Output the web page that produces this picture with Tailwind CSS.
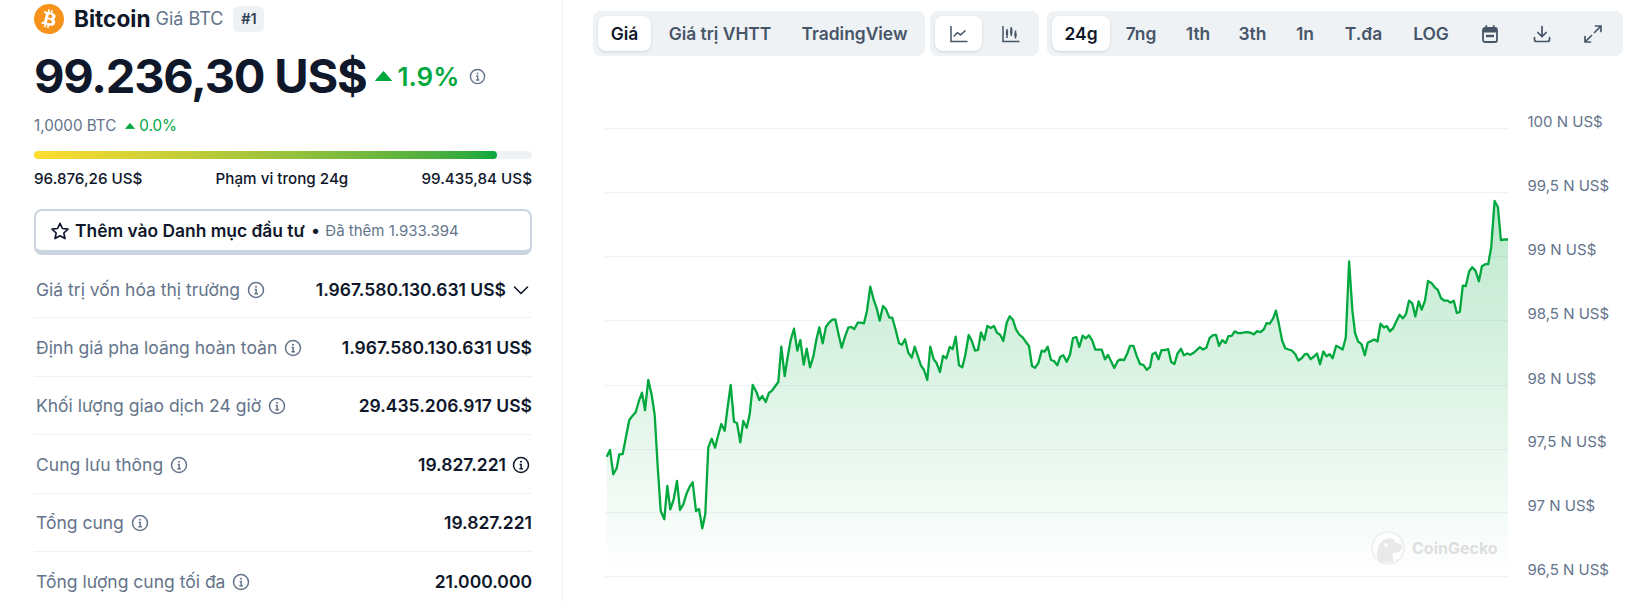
<!DOCTYPE html>
<html lang="vi">
<head>
  <meta charset="UTF-8">
  <title>Bitcoin</title>
  <script src="https://cdn.jsdelivr.net/npm/@tailwindcss/browser@4"></script>
</head>
<body class="bg-white text-[#0f172a] [font-family:Inter,sans-serif] overflow-hidden">
  <svg class="hidden">
    <symbol id="info" viewBox="0 0 24 24" fill="none" stroke="currentColor" stroke-width="2">
      <circle cx="12" cy="12" r="10"/>
      <path d="M10.2 11.2H12.2V16.8M9.8 17H14.6" stroke-width="2"/>
      <circle cx="12" cy="7.6" r="1.3" fill="currentColor" stroke="none"/>
    </symbol>
  </svg>

  <div class="flex h-[603px]">
    <!-- left column -->
    <aside class="w-[563px] shrink-0 border-r border-[#eff2f5] pl-[34px] pr-[30px] pt-[4px]">
      <div class="flex items-center h-[29px]">
        <svg class="w-[30px] h-[30px] shrink-0" viewBox="0 0 24 24"><circle cx="12" cy="12" r="11" fill="#fff"/><path fill="#f7931a" d="M23.638 14.904c-1.602 6.43-8.113 10.34-14.542 8.736C2.67 22.05-1.244 15.525.362 9.105 1.962 2.67 8.475-1.243 14.9.358c6.43 1.605 10.342 8.115 8.738 14.548v-.002zm-6.35-4.613c.24-1.59-.974-2.45-2.64-3.03l.54-2.153-1.315-.33-.525 2.107c-.345-.087-.705-.167-1.064-.25l.526-2.127-1.32-.33-.54 2.165c-.285-.067-.565-.132-.84-.2l-1.815-.45-.35 1.407s.975.225.955.236c.535.136.63.486.615.766l-1.477 5.92c-.075.166-.24.406-.614.314.015.02-.96-.24-.96-.24l-.66 1.51 1.71.426.93.242-.54 2.19 1.32.327.54-2.17c.36.1.705.19 1.05.273l-.51 2.154 1.32.33.545-2.19c2.24.427 3.93.257 4.64-1.774.57-1.637-.03-2.58-1.217-3.196.854-.193 1.5-.76 1.68-1.93h.01zm-3.01 4.22c-.404 1.64-3.157.75-4.05.53l.72-2.9c.896.23 3.757.67 3.33 2.37zm.41-4.24c-.37 1.49-2.662.735-3.405.55l.654-2.64c.744.18 3.137.524 2.75 2.084v.006z"/></svg>
        <span class="ml-[10px] text-[22.6px] font-bold">Bitcoin</span>
        <span class="ml-[5px] text-[18px] text-[#64748b]">Giá BTC</span>
        <span class="ml-[10px] w-[31px] h-[26px] rounded-md bg-[#eff2f5] text-[#334155] text-[14.5px] font-semibold flex items-center justify-center">#1</span>
      </div>

      <div class="mt-[15px] h-[56px] flex items-center">
        <span class="text-[47px] font-bold leading-[56px] tracking-[-1.2px]">99.236,30 US$</span>
        <svg class="ml-[8px] w-[17px] h-[10px]" viewBox="0 0 17 10"><path d="M8.5 0.5 16.5 9.5H0.5Z" fill="#00a83e" stroke="#00a83e" stroke-linejoin="round"/></svg>
        <span class="ml-[6px] text-[26px] font-semibold text-[#00a83e]">1.9%</span>
        <svg class="ml-[10px] w-[17px] h-[17px] text-[#64748b]"><use href="#info"/></svg>
      </div>

      <div class="mt-[12px] h-[20px] flex items-center text-[15.2px]">
        <span class="text-[#64748b]">1,0000 BTC</span>
        <svg class="ml-[9px] w-[10px] h-[6px]" viewBox="0 0 17 10"><path d="M8.5 0.5 16.5 9.5H0.5Z" fill="#00a83e" stroke="#00a83e" stroke-linejoin="round"/></svg>
        <span class="ml-[4px] text-[#00a83e]">0.0%</span>
      </div>

      <div class="mt-[15px] h-[8px] rounded-full bg-[#eff2f5]">
        <div class="h-full w-[93%] rounded-full bg-gradient-to-r from-[#ffdd2e] to-[#00a83e]"></div>
      </div>
      <div class="mt-[10px] h-[20px] flex items-center justify-between text-[15.2px] font-medium">
        <span>96.876,26 US$</span>
        <span>Phạm vi trong 24g</span>
        <span>99.435,84 US$</span>
      </div>

      <button class="mt-[20px] w-full h-[46px] flex items-center rounded-lg border-2 border-b-[5px] border-[#cbd5e1] pl-[14px] pt-[1px] bg-white">
        <svg class="w-[20px] h-[20px] shrink-0" viewBox="0 0 24 24" fill="none" stroke="#0f172a" stroke-width="2" stroke-linejoin="round"><path d="M12 2.8 14.9 9l6.7.8-5 4.6 1.4 6.7L12 17.7l-6 3.4 1.4-6.7-5-4.6L9.1 9z"/></svg>
        <span class="ml-[5px] text-[17.4px] font-semibold">Thêm vào Danh mục đầu tư</span>
        <span class="ml-[6px] text-[17px]">•</span>
        <span class="ml-[5px] text-[15px] text-[#64748b]">Đã thêm 1.933.394</span>
      </button>

      <!-- stats -->
      <div class="mt-[5px] text-[17.5px]">
        <div class="h-[58.4px] pt-[2px] flex items-center justify-between border-b border-[#eff2f5] pl-[2px]">
          <span class="flex items-center text-[#64748b]">Giá trị vốn hóa thị trường<svg class="ml-[7px] w-[18px] h-[18px]"><use href="#info"/></svg></span>
          <span class="flex items-center font-semibold">1.967.580.130.631 US$<svg class="ml-[6px] mr-[2px] w-[18px] h-[18px]" viewBox="0 0 18 18" fill="none" stroke="#0f172a" stroke-width="1.6" stroke-linecap="round" stroke-linejoin="round"><path d="M2.5 6 9 12.5 15.5 6"/></svg></span>
        </div>
        <div class="h-[58.4px] pt-[2px] flex items-center justify-between border-b border-[#eff2f5] pl-[2px]">
          <span class="flex items-center text-[#64748b]">Định giá pha loãng hoàn toàn<svg class="ml-[7px] w-[18px] h-[18px]"><use href="#info"/></svg></span>
          <span class="font-semibold">1.967.580.130.631 US$</span>
        </div>
        <div class="h-[58.4px] pt-[2px] flex items-center justify-between border-b border-[#eff2f5] pl-[2px]">
          <span class="flex items-center text-[#64748b]">Khối lượng giao dịch 24 giờ<svg class="ml-[7px] w-[18px] h-[18px]"><use href="#info"/></svg></span>
          <span class="font-semibold">29.435.206.917 US$</span>
        </div>
        <div class="h-[58.4px] pt-[2px] flex items-center justify-between border-b border-[#eff2f5] pl-[2px]">
          <span class="flex items-center text-[#64748b]">Cung lưu thông<svg class="ml-[7px] w-[18px] h-[18px]"><use href="#info"/></svg></span>
          <span class="flex items-center font-semibold">19.827.221<svg class="ml-[6px] mr-[2px] w-[18px] h-[18px]"><use href="#info"/></svg></span>
        </div>
        <div class="h-[58.4px] pt-[2px] flex items-center justify-between border-b border-[#eff2f5] pl-[2px]">
          <span class="flex items-center text-[#64748b]">Tổng cung<svg class="ml-[7px] w-[18px] h-[18px]"><use href="#info"/></svg></span>
          <span class="font-semibold">19.827.221</span>
        </div>
        <div class="h-[58.4px] pt-[2px] flex items-center justify-between pl-[2px]">
          <span class="flex items-center text-[#64748b]">Tổng lượng cung tối đa<svg class="ml-[7px] w-[18px] h-[18px]"><use href="#info"/></svg></span>
          <span class="font-semibold">21.000.000</span>
        </div>
      </div>
    </aside>

    <!-- chart panel -->
    <main class="flex-1 min-w-0">
      <div class="pt-[11px] pl-[30px] flex h-[56px] text-[17.4px] font-semibold text-[#475569]">
        <div class="flex h-[45px] p-[5px] rounded-lg bg-[#eff2f5]">
          <button class="w-[53px] pt-[1px] rounded-lg bg-white shadow-sm text-[#0f172a]">Giá</button>
          <button class="w-[138px] pt-[1px]">Giá trị VHTT</button>
          <button class="w-[131px] pt-[1px]">TradingView</button>
        </div>
        <div class="ml-[5px] flex h-[45px] p-[5px] rounded-lg bg-[#eff2f5]">
          <button class="w-[47px] rounded-lg bg-white shadow-sm flex items-center justify-center">
            <svg class="w-[20px] h-[20px]" viewBox="0 0 20 20" fill="none" stroke="#475569" stroke-width="1.5"><path d="M2 2V17.5H18.5"/><path d="M4.8 12.5 8.5 8.6l3 2.3 5-4.4" stroke-linejoin="round"/></svg>
          </button>
          <button class="w-[52px] flex items-center justify-center pl-[6px]">
            <svg class="w-[20px] h-[20px]" viewBox="0 0 20 20" fill="none" stroke="#475569" stroke-width="1.5"><path d="M2 2V17.5H18.5"/><path d="M6 5v9M10.3 3v9M14.5 6.5v8"/><path d="M4.9 7h2.2v4H4.9zM9.2 5h2.2v5H9.2zM13.4 9h2.2v3.5h-2.2z" fill="#475569" stroke="none"/></svg>
          </button>
        </div>
        <div class="ml-[8px] flex h-[45px] p-[5px] rounded-lg bg-[#eff2f5]">
          <button class="w-[58px] pt-[1px] rounded-lg bg-white shadow-sm text-[#0f172a]">24g</button>
          <button class="w-[62px] pt-[1px]">7ng</button>
          <button class="w-[52px] pt-[1px]">1th</button>
          <button class="w-[57px] pt-[1px]">3th</button>
          <button class="w-[48px] pt-[1px]">1n</button>
          <button class="w-[69px] pt-[1px]">T.đa</button>
          <button class="w-[66px] pt-[1px]">LOG</button>
          <button class="w-[52px] flex items-center justify-center">
            <svg class="w-[20px] h-[20px]" viewBox="0 0 20 20" fill="none" stroke="#475569" stroke-width="1.8"><rect x="3" y="4" width="14" height="14" rx="2"/><path d="M3 6.5h14" stroke-width="4"/><path d="M6.3 1.8V4M13.7 1.8V4" stroke-linecap="round"/><path d="M6 12h8" stroke-width="2.4"/></svg>
          </button>
          <button class="w-[52px] flex items-center justify-center">
            <svg class="w-[20px] h-[20px]" viewBox="0 0 20 20" fill="none" stroke="#475569" stroke-width="1.7" stroke-linecap="round" stroke-linejoin="round"><path d="M10 2.5V12.5M5.8 8.5 10 12.7 14.2 8.5"/><path d="M2.5 13.5V15.5a2 2 0 0 0 2 2h11a2 2 0 0 0 2-2V13.5"/></svg>
          </button>
          <button class="w-[50px] flex items-center justify-center">
            <svg class="w-[20px] h-[20px]" viewBox="0 0 20 20" fill="none" stroke="#475569" stroke-width="1.7" stroke-linecap="round" stroke-linejoin="round"><path d="M11.5 8.5 18 2M12.5 2H18V7.5"/><path d="M8.5 11.5 2 18M7.5 18H2V12.5"/></svg>
          </button>
        </div>
      </div>

      <svg class="block w-[1082px] h-[547px]" viewBox="563 56 1082 547">
        <defs>
          <linearGradient id="area" x1="0" y1="200" x2="0" y2="576" gradientUnits="userSpaceOnUse">
            <stop offset="0" stop-color="#00a83e" stop-opacity="0.26"/>
            <stop offset="1" stop-color="#00a83e" stop-opacity="0"/>
          </linearGradient>
        </defs>
        <g stroke="#eff2f5" stroke-width="1">
          <path d="M605 128.5H1508M605 192.5H1508M605 256.5H1508M605 320.5H1508M605 385.5H1508M605 449.5H1508M605 512.5H1508M605 576.5H1508"/>
        </g>
        <path id="fill" fill="url(#area)"/>
        <path id="line" fill="none" stroke="#00a83e" stroke-width="2.3" stroke-linejoin="round"/>
        <g class="text-[15px]" fill="#64748b">
          <text x="1527.5" y="127">100 N US$</text>
          <text x="1527.5" y="191">99,5 N US$</text>
          <text x="1527.5" y="255">99 N US$</text>
          <text x="1527.5" y="319">98,5 N US$</text>
          <text x="1527.5" y="384">98 N US$</text>
          <text x="1527.5" y="447">97,5 N US$</text>
          <text x="1527.5" y="511">97 N US$</text>
          <text x="1527.5" y="575">96,5 N US$</text>
        </g>
        <!-- watermark -->
        <g opacity="0.75">
          <circle cx="1388" cy="548" r="16" fill="#fff" stroke="#e2e2e2" stroke-width="1.2"/>
          <path d="M1378 561c-2-8-1-17 6-21 6-3 11-1 12 3 3 0 6 1 6 4 0 4-5 6-9 6-1 3 0 6 1 8-5 2-11 2-16 0z" fill="#e3e3e3"/>
          <circle cx="1386" cy="545" r="2" fill="#fff"/>
          <text x="1412" y="554" class="text-[16px] font-bold" fill="#d4d4d4">CoinGecko</text>
        </g>
      </svg>
    </main>
  </div>

  <script>
    // traced in three pieces from the reference, [offsetX, offsetY, scale, points]
    var parts = [
      [600, 360, 3, [20,290,30,270,40,343,50,325,58,283,68,282,78,230,88,180,97,168,107,157,116,125,126,98,135,150,145,60,155,105,164,165,173,320,182,452,193,478,202,378,211,448,221,418,231,363,240,450,250,433,259,403,269,380,278,367,288,453,297,447,307,505,316,462,325,262,335,236,345,263,354,228,364,192,374,212,383,140,392,75,402,185,411,189,421,247,430,183,440,203,449,163,458,75,469,95,478,120,487,108,497,126,507,98,516,92,526,78,535,66]],
      [600, 100, 3, [544,740,554,828,563,770,572,720,582,686,592,752,601,720,611,794,620,746,630,802,640,770,649,720,658,682,668,730,678,680,687,668,697,659,706,658,716,705,725,743,735,710,745,683,754,681,763,687,773,668,782,668,792,670,801,632,811,560,820,595,830,625,839,662,849,618,858,628,868,653,877,653,887,690,897,730,906,734,915,718,925,758,935,773,944,740,954,770,963,797,972,810,982,840,991,740,1001,778,1010,790,1020,816,1029,768,1039,775,1049,741,1058,747,1067,710,1077,796,1087,802,1096,765,1106,705,1115,722,1125,752,1134,750,1143,697,1153,720,1162,678,1172,684,1182,678,1191,698,1201,705,1210,723,1220,668,1229,649,1239,660,1248,688,1258,704,1268,712,1277,725,1287,738,1296,798,1305,803,1315,790,1325,752,1334,755,1343,740,1353,780,1362,783,1372,796,1381,770,1390,766,1400,785,1410,764,1419,714,1429,711,1438,741,1448,707,1457,715,1467,706,1477,722,1486,749,1496,749,1505,749,1515,778,1524,765,1534,785,1543,804,1553,783]],
      [1120, 100, 2.99, [0,776,12,778,22,757,30,735,40,735,50,765,60,790,70,792,80,807,90,798,97,760,106,755,115,775,124,748,134,748,144,745,153,783,163,789,172,758,182,744,191,763,201,758,210,762,220,756,229,748,239,739,248,746,258,741,268,712,278,703,287,702,296,735,306,718,316,727,324,706,334,705,343,692,353,697,362,697,372,695,382,694,391,696,400,701,410,691,420,694,430,686,438,667,448,669,458,652,466,630,475,670,485,720,494,742,504,746,514,749,524,760,533,779,543,772,553,760,560,759,570,775,580,767,589,758,598,790,608,752,617,766,627,760,636,772,646,735,656,740,666,746,675,710,685,483,695,630,703,697,712,722,722,730,732,763,741,725,751,721,760,716,770,722,779,669,789,680,798,676,807,692,817,682,827,660,836,642,846,653,855,640,864,600,874,608,883,647,893,602,902,627,912,600,921,541,931,547,941,560,950,567,960,593,970,600,980,600,988,606,998,600,1007,637,1016,634,1025,555,1034,556,1044,512,1053,500,1063,510,1073,542,1082,497,1092,491,1101,491,1110,440,1120,302,1130,320,1139,419,1150,417,1160,417]]
    ];
    var pts = [];
    parts.forEach(function (p) {
      for (var i = 0; i < p[3].length; i += 2) {
        pts.push((p[0] + p[3][i] / p[2]).toFixed(1) + ' ' + (p[1] + p[3][i + 1] / p[2]).toFixed(1));
      }
    });
    var d = 'M' + pts.join('L');
    document.getElementById('line').setAttribute('d', d);
    var first = pts[0].split(' ')[0], last = pts[pts.length - 1].split(' ')[0];
    document.getElementById('fill').setAttribute('d', d + 'L' + last + ' 576L' + first + ' 576Z');
  </script>
</body>
</html>
